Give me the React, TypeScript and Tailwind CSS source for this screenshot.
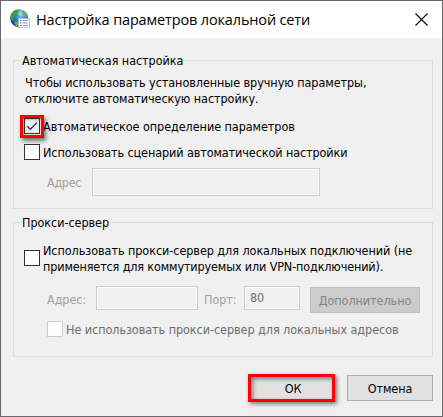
import type { ReactNode } from "react";

const Checkbox = ({ checked, disabled }: { checked?: boolean; disabled?: boolean }) => (
  <span
    className={`block h-4 w-4 shrink-0 border ${
      disabled ? "border-[#cccccc] bg-[#fdfdfd]" : checked ? "border-[#333333] bg-[#eeeeee]" : "border-[#333333] bg-white"
    }`}
  >
    {checked && (
      <svg viewBox="0 0 14 14" className="block h-[14px] w-[14px]" fill="none" stroke="#333" strokeWidth="1.3">
        <path d="M2.2 7.2 5.3 10.3 12 3.6" />
      </svg>
    )}
  </span>
);

const Group = ({ title, className, children }: { title: string; className: string; children: ReactNode }) => (
  <section className={`relative w-[420px] border border-[#dcdcdc] ${className}`}>
    <h2 className="absolute -top-[8px] left-[6px] bg-[#f0f0f0] px-[2px] tracking-[-0.06px]">{title}</h2>
    {children}
  </section>
);

const NetworkIcon = () => (
  <svg viewBox="0 0 20 20" className="mb-px h-5 w-5 shrink-0">
    <defs>
      <radialGradient id="globe" cx="0.6" cy="0.25" r="0.8">
        <stop offset="0" stopColor="#a9dcf5" />
        <stop offset="0.4" stopColor="#3a8ad0" />
        <stop offset="1" stopColor="#132b78" />
      </radialGradient>
    </defs>
    <circle cx="9.2" cy="9.2" r="9" fill="url(#globe)" />
    <path d="M1 6C2 3 4 1 7 .6L9 2 7 4 8 6 5 8 3 8 4 11 2 12C.6 10 .4 8 1 6Z" fill="#3f9b4c" />
    <path d="M13 1.5 16.5 4.8 17.5 8 14 7 12 4Z" fill="#62b552" />
    <path d="M4 13 8 12 9 17 6 17Z" fill="#5cb943" />
    <path d="M8.5 9.5H19.5V18.5H8.5Z" fill="#f7f8fa" stroke="#b4bac4" strokeWidth="0.8" />
    <path d="M10 11.5H11.6M10 14H11.6M10 16.5H11.6" stroke="#4a7fb4" strokeWidth="1.2" />
    <path d="M12.7 11.5H18M12.7 14H18M12.7 16.5H18" stroke="#8f98a5" strokeWidth="0.9" />
  </svg>
);

const App = () => {
  return (
    <div className="h-[417px] w-[443px] overflow-hidden border border-[#6b696b] bg-[#f0f0f0] font-['DejaVu_Sans_Condensed','DejaVu_Sans',sans-serif] text-[12.5px] leading-4 tracking-[-0.06px] whitespace-nowrap text-black">
      {/* Title bar */}
      <header className="flex h-[37px] items-center bg-white pr-[14px] pl-[9px]">
        <NetworkIcon />
        <h1 className="ml-[6px] flex-1 font-['Open_Sans',sans-serif] text-[14.5px] leading-5 tracking-[-0.15px]">
          Настройка параметров локальной сети
        </h1>
        <svg viewBox="0 0 13 13" className="h-[13px] w-[13px]" stroke="#000" strokeWidth="1.1">
          <path d="M.5 .5 12.5 12.5M12.5 .5 .5 12.5" />
        </svg>
      </header>

      <main className="pt-[22px] pl-[12px]">
        {/* Automatic configuration */}
        <Group title="Автоматическая настройка" className="h-[149px] pt-[14px] pl-[10px]">
          <p className="pl-px">
            Чтобы использовать установленные вручную параметры,
            <br />
            отключите автоматическую настройку.
          </p>
          <label className="mt-[11px] flex h-4 items-center">
            <span className="relative">
              <Checkbox checked />
              <span className="absolute -top-[3px] -left-[4px] h-[23px] w-[24px] border-[3px] border-[#fb0007] shadow-[2px_3px_4px_rgba(0,0,0,0.5),inset_1px_1px_3px_rgba(0,0,0,0.4)]" />
            </span>
            <span className="mt-[2px] ml-[3px]">Автоматическое определение параметров</span>
          </label>
          <label className="mt-[10px] flex h-4 items-center">
            <Checkbox />
            <span className="mt-[2px] ml-[3px] tracking-[-0.1px]">Использовать сценарий автоматической настройки</span>
          </label>
          <div className="mt-[8px] flex items-center pl-[23px] text-[#a0a0a0]">
            <span className="mt-[2px] w-[45px] tracking-[-0.3px]">Адрес</span>
            <span className="h-7 w-[228px] border border-[#cccccc] shadow-[inset_0_0_0_1px_#fff]" />
          </div>
        </Group>

        {/* Proxy server */}
        <Group title="Прокси-сервер" className="mt-[13px] h-[135px] pt-[20px] pl-[10px]">
          <label className="flex items-start">
            <span className="mt-[7px]">
              <Checkbox />
            </span>
            <span className="ml-[3px]">
              Использовать прокси-сервер для локальных подключений (не
              <br />
              <span className="tracking-[-0.14px]">применяется для коммутируемых или VPN-подключений).</span>
            </span>
          </label>
          <div className="mt-[11px] flex h-[27px] items-start pl-[23px] text-[#a0a0a0]">
            <span className="mt-[6px] w-[49px]">Адрес:</span>
            <span className="h-6 w-[102px] border border-[#cccccc] shadow-[inset_0_0_0_1px_#fff]" />
            <span className="mt-[6px] ml-[6px] w-[40px]">Порт:</span>
            <span className="h-6 w-[56px] border border-[#cccccc] pt-[3px] pl-[5px] text-[#6d6d6d] shadow-[inset_0_0_0_1px_#fff]">
              80
            </span>
            <button
              disabled
              className="mt-px ml-[10px] h-[26px] w-[110px] border border-[#bfbfbf] bg-[#cccccc] pt-px text-[#838383]"
            >
              Дополнительно
            </button>
          </div>
          <label className="mt-[8px] flex h-4 items-center pl-[23px] text-[#6d6d6d]">
            <Checkbox disabled />
            <span className="mt-px ml-[3px]">Не использовать прокси-сервер для локальных адресов</span>
          </label>
        </Group>

        {/* Dialog buttons */}
        <div className="mt-[17px] flex items-center pl-[235px]">
          <button className="h-7 w-[87px] border-[3px] border-[#fb0007] bg-[#e1e1e1] pt-px pl-[3px] shadow-[2px_2px_4px_rgba(0,0,0,0.5),inset_2px_2px_4px_rgba(0,0,0,0.45)]">
            ОК
          </button>
          <button className="ml-[12px] h-[26px] w-[86px] border border-[#adadad] bg-[#e1e1e1] pt-px">
            Отмена
          </button>
        </div>
      </main>
    </div>
  );
};

export default App;
